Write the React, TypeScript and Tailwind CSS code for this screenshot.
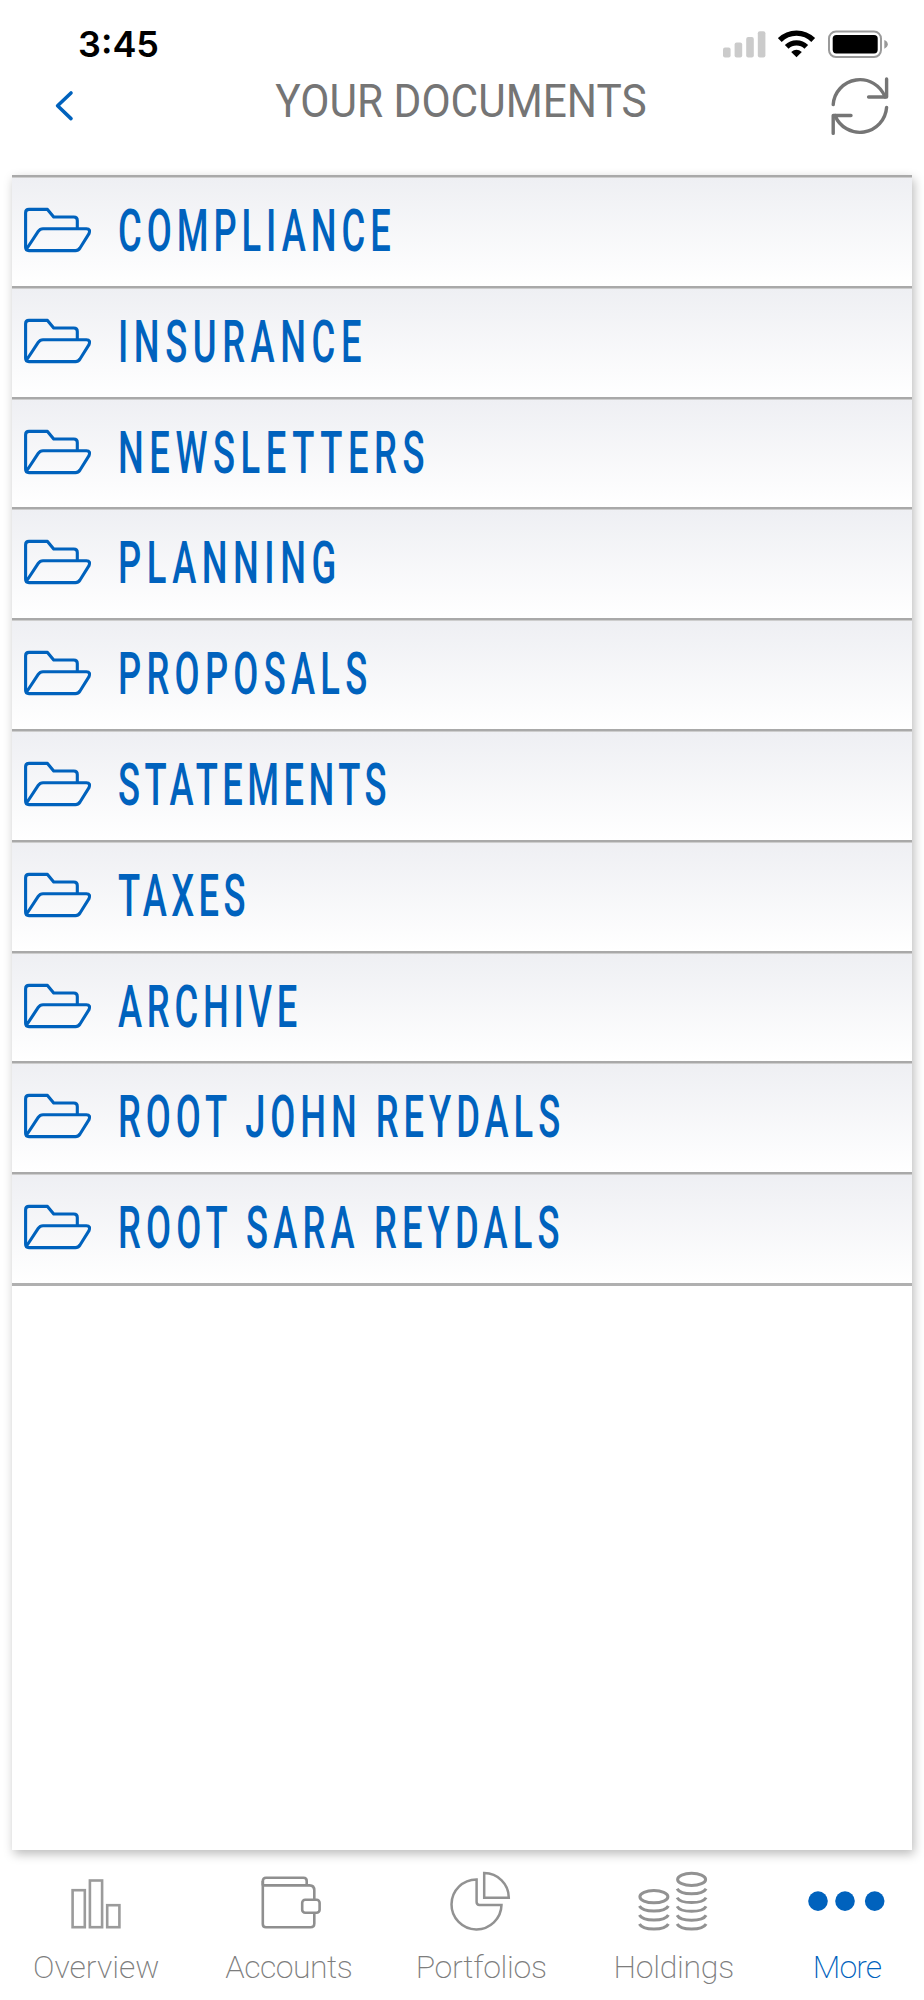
import { ReactNode } from "react";

type Folder = {
  name: string;
  tracking: string;
};

type Tab = {
  label: string;
  icon: ReactNode;
  tracking: string;
  isActive?: boolean;
};

const folders: Folder[] = [
  { name: "COMPLIANCE", tracking: "tracking-[8px]" },
  { name: "INSURANCE", tracking: "tracking-[9px]" },
  { name: "NEWSLETTERS", tracking: "tracking-[9px]" },
  { name: "PLANNING", tracking: "tracking-[8.9px]" },
  { name: "PROPOSALS", tracking: "tracking-[8.5px]" },
  { name: "STATEMENTS", tracking: "tracking-[7.2px]" },
  { name: "TAXES", tracking: "tracking-[7px]" },
  { name: "ARCHIVE", tracking: "tracking-[7.7px]" },
  { name: "ROOT JOHN REYDALS", tracking: "tracking-[8px]" },
  { name: "ROOT SARA REYDALS", tracking: "tracking-[8.3px]" },
];

const FolderIcon = () => (
  <svg width="68" height="46" fill="none" stroke="#0062bd" strokeWidth="3.1" strokeLinejoin="round">
    <path d="M54.3 21.7V13.5Q54.3 10 50.8 10H30.7L24.5 2.4H6Q2.6 2.4 2.6 5.8V40.3Q2.6 43.6 6 43.6H52.5Q55.2 43.6 57 41L66 26.6Q67.8 21.7 63.5 21.7H20Q17 21.7 15.2 24.4L3.6 42" />
  </svg>
);

const OverviewIcon = () => (
  <svg width="80" height="62" fill="none" stroke="#9b9b9b" strokeWidth="2.6">
    <rect x="16.6" y="20.2" width="12.2" height="37" />
    <rect x="33.9" y="10.5" width="12.2" height="46.7" />
    <rect x="51.2" y="35.2" width="12.2" height="22" />
  </svg>
);

const AccountsIcon = () => (
  <svg width="80" height="62" fill="none" stroke="#8f8f8f" strokeWidth="2.6">
    <path d="M13.8 15.4V11Q13.8 7.8 17 7.8H54.5Q57.7 7.8 57.7 11V15.4" />
    <path d="M13.8 15.4H60.5Q65.3 15.4 65.3 20.5V29.5M65.3 43V53.5Q65.3 57.3 61.5 57.3H17Q13.8 57.3 13.8 54V11" />
    <rect x="53.2" y="29.8" width="17.4" height="13" rx="3" />
  </svg>
);

const PortfoliosIcon = () => (
  <svg width="80" height="62" fill="none" stroke="#929292" strokeWidth="2.5">
    <path d="M35.6 9.4A25 25 0 1 0 60.5 34.9H38.5Q35.6 34.9 35.6 32Z" />
    <path d="M43.2 3V27.8H67.8A24.7 24.7 0 0 0 43.2 3Z" />
  </svg>
);

const HoldingsIcon = () => (
  <svg width="80" height="62" fill="none" stroke="#929292" strokeWidth="3">
    <ellipse cx="19.9" cy="26.7" rx="14" ry="6.1" />
    {[36, 45, 54].map((y) => (
      <path key={y} d={`M5.4 ${y}C9 ${y + 6.6} 30.8 ${y + 6.6} 34.4 ${y}`} />
    ))}
    <ellipse cx="57.6" cy="9.4" rx="14" ry="6.1" />
    {[18.8, 27.6, 36.4, 45.2, 54].map((y) => (
      <path key={y} d={`M43.1 ${y}C46.7 ${y + 6.6} 68.5 ${y + 6.6} 72.1 ${y}`} />
    ))}
  </svg>
);

const MoreIcon = () => (
  <svg width="80" height="62" fill="#0062bd">
    <circle cx="11" cy="31.1" r="9.8" />
    <circle cx="38" cy="31.1" r="9.8" />
    <circle cx="67.7" cy="31.1" r="9.8" />
  </svg>
);

const tabs: Tab[] = [
  { label: "Overview", icon: <OverviewIcon />, tracking: "tracking-normal" },
  { label: "Accounts", icon: <AccountsIcon />, tracking: "tracking-[-0.5px]" },
  { label: "Portfolios", icon: <PortfoliosIcon />, tracking: "tracking-[-0.3px]" },
  { label: "Holdings", icon: <HoldingsIcon />, tracking: "tracking-[-0.3px]" },
  { label: "More", icon: <MoreIcon />, tracking: "tracking-[-0.9px]", isActive: true },
];

const StatusBar = () => (
  <div className="flex h-[72px] items-start justify-between pt-[26px] pr-[36px] pl-[78px]">
    <span className="font-[Inter,sans-serif] text-[36px] leading-[37px] font-semibold text-black">
      3:45
    </span>
    <div className="flex pt-1">
      <svg width="55" height="28" fill="#cbcbcb">
        <rect x="0" y="17.6" width="7.6" height="10" rx="2" />
        <rect x="11.6" y="12.6" width="7.6" height="15" rx="2" />
        <rect x="23.2" y="7" width="7.6" height="20.6" rx="2" />
        <rect x="34.8" y="1.2" width="7.6" height="26.4" rx="2" />
      </svg>
      <svg width="50" height="28" fill="none" stroke="#000">
        <path d="M1.8 10A23.6 23.6 0 0 1 35.2 10" strokeWidth="5.4" />
        <path d="M8.7 16.9A13.8 13.8 0 0 1 28.3 16.9" strokeWidth="5.2" />
        <path d="M18.5 27.3L13.2 22Q18.5 17.4 23.8 22Z" fill="#000" stroke="none" />
      </svg>
      <svg width="60" height="28" fill="none">
        <rect x="1" y="1.6" width="52" height="25.4" rx="7" stroke="#9a9a9a" strokeWidth="2" />
        <rect x="4.7" y="5" width="45" height="18.4" rx="3.6" fill="#000" />
        <path d="M56.3 10Q59.8 11.4 59.8 14.3T56.3 18.8Z" fill="#9a9a9a" />
      </svg>
    </div>
  </div>
);

const Header = () => (
  <div className="flex h-[103px] items-start pr-[34px] pl-[55px]">
    <svg className="mt-[18px]" width="20" height="34" fill="none" stroke="#0062bd" strokeWidth="3.6" strokeLinecap="round" strokeLinejoin="round">
      <path d="M16 3L2.6 15.7L16 28.6" />
    </svg>
    <h1 className="mt-1 ml-[184px] w-[404px] origin-center scale-x-[0.922] text-center text-[46px] leading-[50px] whitespace-nowrap text-[#757575]">
      YOUR DOCUMENTS
    </h1>
    <svg className="mt-1 ml-auto" width="60" height="60" fill="none" stroke="#757575" strokeWidth="3.4" strokeLinecap="round" strokeLinejoin="round">
      <path d="M3.2 28.6A26.8 26.8 0 0 1 55 21" />
      <path d="M56.6 3V21H38.6" />
      <path d="M56.6 31.4A26.8 26.8 0 0 1 5 39.5" />
      <path d="M3.2 57.4V39.5H21" />
    </svg>
  </div>
);

const App = () => {
  return (
    <div className="flex h-[2000px] w-[924px] flex-col overflow-hidden bg-white font-[Roboto,sans-serif]">
      <StatusBar />
      <Header />
      <main className="mx-3 h-[1675px] shrink-0 bg-white shadow-[2px_4px_10px_rgba(0,0,0,0.27)]">
        <ul className="border-b-[3px] border-[#b0b0b0]">
          {folders.map((folder) => (
            <li
              key={folder.name}
              className="flex h-[110.8px] items-start border-t-2 border-[#a9a9a9] bg-linear-to-b from-[#eeeff3] to-white pt-[30px] pl-[11px] shadow-[inset_0_1px_0_#cdcdcd]"
            >
              <FolderIcon />
              <span
                className={`mt-[-6px] ml-[27px] origin-left scale-x-[0.62] text-[58.6px] leading-[60px] font-medium whitespace-nowrap text-[#0062bd] ${folder.tracking}`}
              >
                {folder.name}
              </span>
            </li>
          ))}
        </ul>
      </main>
      <nav className="grid h-[150px] grid-cols-[192.5px_192.5px_192.5px_192.5px_154px] pt-5">
        {tabs.map((tab) => (
          <div
            key={tab.label}
            className={
              tab.isActive
                ? "flex flex-col items-center text-[#0062bd]"
                : "flex flex-col items-center text-[#7d7d7d]"
            }
          >
            {tab.icon}
            <span className={`mt-[16px] text-[32px] leading-[38px] font-extralight ${tab.tracking}`}>
              {tab.label}
            </span>
          </div>
        ))}
      </nav>
    </div>
  );
};

export default App;
